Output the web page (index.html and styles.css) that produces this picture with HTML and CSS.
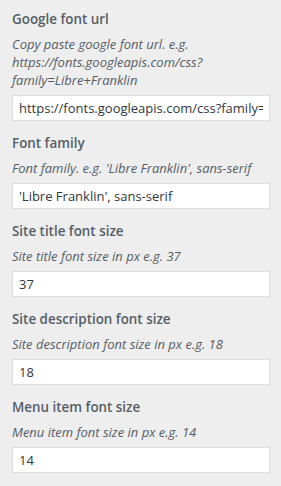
FILE: index.html
```html
<!DOCTYPE html>
<html lang="en">
<head>
  <meta charset="UTF-8">
  <title>Customizer - Fonts</title>
  <link rel="stylesheet" href="styles.css">
</head>
<body>

  <ul class="controls">
    <li class="control">
      <label class="control-title" for="font-url">Google font url</label>
      <span class="control-description">Copy paste google font url. e.g. https://fonts.googleapis.com/css?family=Libre+Franklin</span>
      <input type="text" id="font-url" value="https://fonts.googleapis.com/css?family=Libre+Franklin">
    </li>
    <li class="control">
      <label class="control-title" for="font-family">Font family</label>
      <span class="control-description">Font family. e.g. 'Libre Franklin', sans-serif</span>
      <input type="text" id="font-family" value="'Libre Franklin', sans-serif">
    </li>
    <li class="control">
      <label class="control-title" for="title-size">Site title font size</label>
      <span class="control-description">Site title font size in px e.g. 37</span>
      <input type="text" id="title-size" value="37">
    </li>
    <li class="control">
      <label class="control-title" for="desc-size">Site description font size</label>
      <span class="control-description">Site description font size in px e.g. 18</span>
      <input type="text" id="desc-size" value="18">
    </li>
    <li class="control">
      <label class="control-title" for="menu-size">Menu item font size</label>
      <span class="control-description">Menu item font size in px e.g. 14</span>
      <input type="text" id="menu-size" value="14">
    </li>
  </ul>

</body>
</html>
```

FILE: styles.css
```css
/* base */
* { box-sizing: border-box; margin: 0; padding: 0; }
body {
  font-family: "Open Sans", "Noto Sans", sans-serif;
  background: #eeeeee;
  color: #555d66;
}

/* control list */
.controls {
  list-style: none;
  padding: 7px 11px 0 12px;
}
.control {
  display: flex;
  flex-direction: column;
  margin-bottom: 10px;
}
.control-title {
  font-size: 13.4px;
  font-weight: 600;
  line-height: 24px;
  margin-bottom: 4px;
  color: #555d66;
}
.control-description {
  font-size: 13px;
  font-style: italic;
  line-height: 18px;
  margin-bottom: 6px;
  color: #555d66;
}
.control input {
  width: 100%;
  height: 26px;
  padding: 0 6px;
  font-family: inherit;
  font-size: 13px;
  color: #32373c;
  background: #fff;
  border: 1px solid #dddddd;
  outline: none;
}
```
